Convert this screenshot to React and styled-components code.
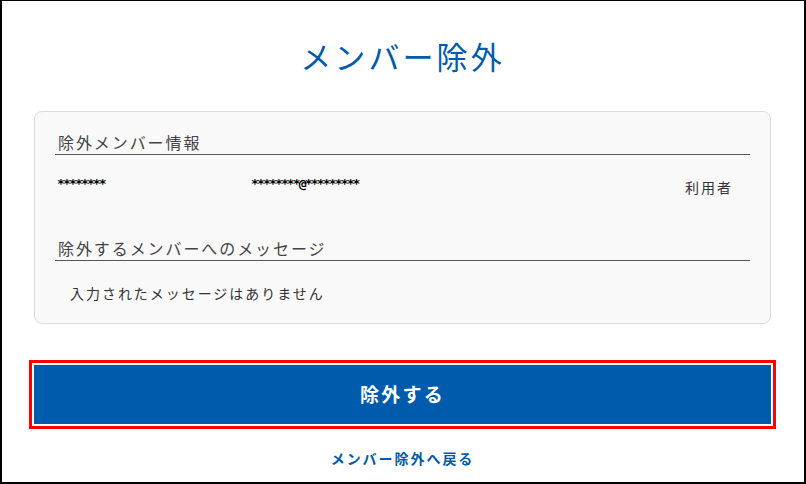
import React from "react";
import styled, { createGlobalStyle } from "styled-components";

const Global = createGlobalStyle`
  html, body { margin: 0; padding: 0; background: #fff; }
  body { font-family: "Noto Sans CJK JP", "Noto Sans", sans-serif; color: #333; }
  * { box-sizing: border-box; }
`;

const Frame = styled.div`
  width: 806px;
  height: 484px;
  border-style: solid;
  border-color: #000;
  border-width: 1px 2px 2px 2px;
  padding: 0 33px 0 32px;
  display: flex;
  flex-direction: column;
  align-items: stretch;
`;

const Title = styled.h1`
  margin: 35px 0 35px;
  font-size: 31px;
  line-height: 40px;
  font-weight: 400;
  color: #005bac;
  text-align: center;
  letter-spacing: 0.1em;
`;

const Card = styled.section`
  background: #f9f9f9;
  border: 1px solid #dcdcdc;
  border-radius: 8px;
  padding: 18px 20px 19px;
  height: 213px;
`;

const SectionHeading = styled.h2`
  margin: ${(p) => p.$top || 0}px 0 0;
  padding-left: 3px;
  font-size: 16px;
  line-height: 24px;
  font-weight: 400;
  color: #444;
  letter-spacing: 0.12em;
  border-bottom: 1px solid #555;
`;

const MemberRow = styled.div`
  display: flex;
  align-items: flex-start;
  margin-top: 17px;
  padding-left: 2px;
  padding-right: 17px;
`;

const Masked = styled.span`
  font-family: "DejaVu Sans Mono", monospace;
  font-size: 13px;
  font-weight: 700;
  line-height: 20px;
  letter-spacing: -1.85px;
  padding-top: 2px;
  color: #000;
  width: ${(p) => p.$w || "auto"};
  flex: ${(p) => (p.$grow ? 1 : "none")};
`;

const Role = styled.span`
  font-size: 14px;
  line-height: 20px;
  padding-top: 5px;
  letter-spacing: 0.14em;
  color: #333;
`;

const Message = styled.p`
  margin: 22px 0 0;
  padding-left: 15px;
  font-size: 14px;
  line-height: 20px;
  letter-spacing: 0.14em;
  color: #333;
`;

const SubmitButton = styled.button`
  margin-top: 41px;
  height: 59px;
  width: 100%;
  padding: 0 0 3px;
  background: #005bac;
  color: #fff;
  border: none;
  border-radius: 0;
  outline: 3px solid #ff0000;
  outline-offset: 2px;
  font-family: "Noto Sans CJK JP", sans-serif;
  font-size: 19px;
  font-weight: 700;
  letter-spacing: 0.12em;
  cursor: pointer;
`;

const BackLink = styled.a`
  margin-top: 24px;
  align-self: center;
  font-size: 14px;
  line-height: 20px;
  font-weight: 700;
  color: #005bac;
  letter-spacing: 0.14em;
  text-decoration: none;
`;

export default function App() {
  return (
    <>
      <Global />
      <Frame>
        <Title>メンバー除外</Title>
        <Card>
          <SectionHeading>除外メンバー情報</SectionHeading>
          <MemberRow>
            <Masked $w="194px">********</Masked>
            <Masked $grow>********@*********</Masked>
            <Role>利用者</Role>
          </MemberRow>
          <SectionHeading $top={39}>除外するメンバーへのメッセージ</SectionHeading>
          <Message>入力されたメッセージはありません</Message>
        </Card>
        <SubmitButton>除外する</SubmitButton>
        <BackLink href="#">メンバー除外へ戻る</BackLink>
      </Frame>
    </>
  );
}
